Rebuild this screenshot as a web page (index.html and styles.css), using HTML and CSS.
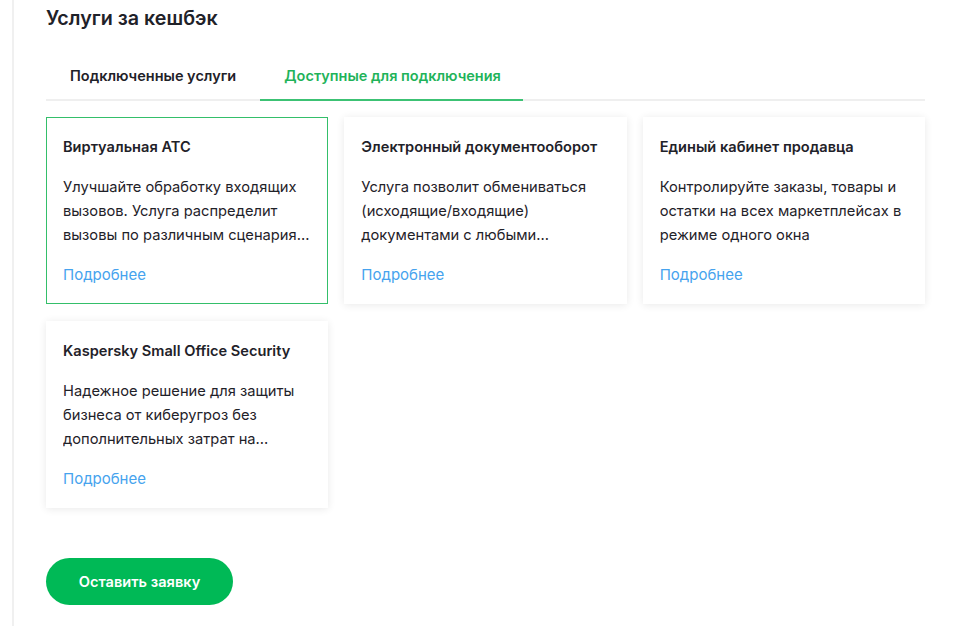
FILE: index.html
```html
<!DOCTYPE html>
<html lang="ru">
<head>
    <meta charset="UTF-8">
    <meta name="viewport" content="width=device-width, initial-scale=1.0">
    <title>Услуги за кешбэк</title>
    <link rel="stylesheet" href="styles.css">
</head>
<body>
    <div class="page">
        <h2 class="page-title">Услуги за кешбэк</h2>

        <div class="tabs">
            <a href="#" class="tab">Подключенные услуги</a>
            <a href="#" class="tab active">Доступные для подключения</a>
        </div>

        <div class="cards">
            <div class="card selected">
                <h3>Виртуальная АТС</h3>
                <p>Улучшайте обработку входящих вызовов. Услуга распределит вызовы по различным сценария...</p>
                <a href="#" class="more">Подробнее</a>
            </div>
            <div class="card">
                <h3>Электронный документооборот</h3>
                <p>Услуга позволит обмениваться (исходящие/входящие) документами с любыми...</p>
                <a href="#" class="more">Подробнее</a>
            </div>
            <div class="card">
                <h3>Единый кабинет продавца</h3>
                <p>Контролируйте заказы, товары и остатки на всех маркетплейсах в режиме одного окна</p>
                <a href="#" class="more">Подробнее</a>
            </div>
            <div class="card">
                <h3>Kaspersky Small Office Security</h3>
                <p>Надежное решение для защиты бизнеса от киберугроз без дополнительных затрат на...</p>
                <a href="#" class="more">Подробнее</a>
            </div>
        </div>

        <button class="order-button">Оставить заявку</button>
    </div>
</body>
</html>
```

FILE: styles.css
```css
body {
    font-family: Inter, "Noto Sans", Arial, sans-serif;
    margin: 0;
    padding: 0;
    background: #fff;
    color: #1f2229;
}

.page {
    margin-left: 12px;
    border-left: 2px solid #f0f0f0;
    padding: 4px 35px 22px 32px;
    min-height: 600px;
}

.page-title {
    font-size: 19.7px;
    line-height: 28px;
    font-weight: 600;
    margin: 0;
}

.tabs {
    display: flex;
    margin-top: 20px;
    border-bottom: 2px solid #efefef;
}

.tab {
    display: block;
    padding: 14px 24px 13px;
    margin-bottom: -2px;
    font-size: 14.5px;
    line-height: 20px;
    font-weight: 600;
    color: #1f2229;
    text-decoration: none;
    border-bottom: 2px solid transparent;
}

.tab.active {
    color: #1fb35a;
    border-bottom-color: #3cc274;
    padding-right: 22px;
}

.cards {
    display: grid;
    grid-template-columns: repeat(3, 1fr);
    gap: 17px 16px;
    margin-top: 16px;
}

.card {
    background: #fff;
    border: 1px solid transparent;
    box-shadow: 0 1px 8px rgba(0, 0, 0, 0.09);
    padding: 19px 16px 17px;
    height: 187px;
    box-sizing: border-box;
}

.card.selected {
    border-color: #34bf6a;
    box-shadow: none;
}

.card h3 {
    font-size: 14.6px;
    line-height: 20px;
    font-weight: 600;
    margin: 0;
}

.card p {
    font-size: 14.7px;
    line-height: 24px;
    margin: 18px 0 0;
    height: 72px;
    overflow: hidden;
}

.card .more {
    display: block;
    margin-top: 18px;
    font-size: 15px;
    line-height: 20px;
    color: #46a3ee;
    text-decoration: none;
}

.order-button {
    margin-top: 50px;
    width: 187px;
    height: 47px;
    border: none;
    border-radius: 24px;
    background: #00b956;
    color: #fff;
    font-family: inherit;
    font-size: 14.6px;
    font-weight: 600;
    cursor: pointer;
}

.order-button:hover {
    background: #00a64d;
}
```
